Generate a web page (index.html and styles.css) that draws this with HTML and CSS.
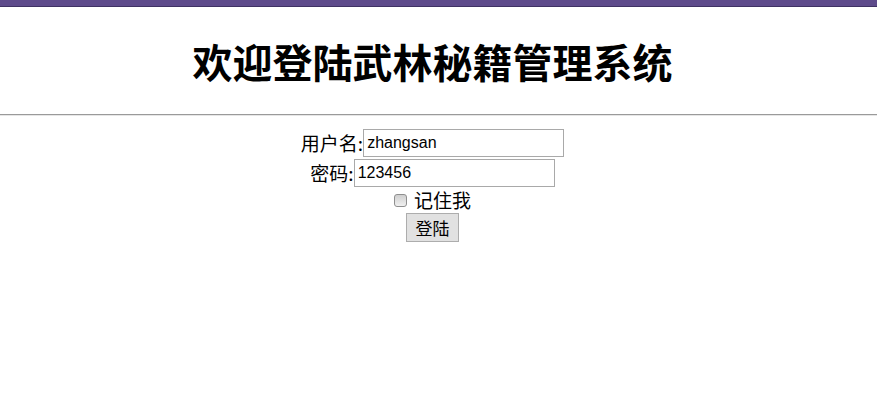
FILE: index.html
```html
<!DOCTYPE html>
<html lang="zh">
<head>
    <meta charset="UTF-8">
    <title>登陆</title>
    <link rel="stylesheet" href="styles.css">
</head>
<body>
<div class="topbar"></div>
<div class="page">
    <h1 class="title">欢迎登陆武林秘籍管理系统</h1>
</div>
<hr class="divider">
<div class="page">
    <form class="login" action="#">
        <div class="row">
            <label for="username">用户名:</label><input type="text" id="username" class="field" value="zhangsan">
        </div>
        <div class="row">
            <label for="password">密码:</label><input type="text" id="password" class="field" value="123456">
        </div>
        <div class="row row-check">
            <input type="checkbox" id="remember" class="check"><label for="remember">记住我</label>
        </div>
        <div class="row row-btn">
            <button type="button" class="btn">登陆</button>
        </div>
    </form>
</div>
</body>
</html>
```

FILE: styles.css
```css
* {
    padding: 0;
    margin: 0;
    box-sizing: border-box;
}
body {
    background-color: #fff;
    color: #000;
    font-family: "Noto Sans CJK SC", "Liberation Sans", sans-serif;
}
.topbar {
    height: 7px;
    background-color: #5e4b8b;
    border-bottom: 1px solid #3f3263;
}
.page {
    padding-right: 12px;
}
.title {
    padding-top: 29px;
    height: 107px;
    font-size: 40px;
    line-height: 50px;
    font-weight: bold;
    text-align: center;
}
.divider {
    height: 2px;
    border: 0;
    border-top: 1px solid #9a9a9a;
    border-bottom: 1px solid #e6e6e6;
}
.login {
    padding-top: 12px;
    font-size: 18px;
}
.row {
    display: flex;
    justify-content: center;
    align-items: center;
    height: 30px;
}
.row label {
    font-size: 19px;
    line-height: 28px;
}
.field {
    width: 201px;
    height: 28px;
    padding: 1px 3px;
    border: 1px solid #a9a9a9;
    font: 16px "Liberation Sans", Arial, sans-serif;
    color: #000;
    outline: none;
}
.row-check {
    height: 24px;
}
.check {
    appearance: none;
    -webkit-appearance: none;
    width: 13px;
    height: 13px;
    margin-right: 7px;
    border: 1px solid #8f8f8f;
    border-radius: 3px;
    background: linear-gradient(#cfcfcf, #f0f0f0);
}
.row-btn {
    height: 30px;
    align-items: flex-start;
    padding-top: 1px;
}
.btn {
    width: 53px;
    height: 29px;
    border: 1px solid #adadad;
    background-color: #e1e1e1;
    font-family: "Noto Sans CJK SC", sans-serif;
    font-size: 17px;
    color: #000;
    cursor: pointer;
}
```
